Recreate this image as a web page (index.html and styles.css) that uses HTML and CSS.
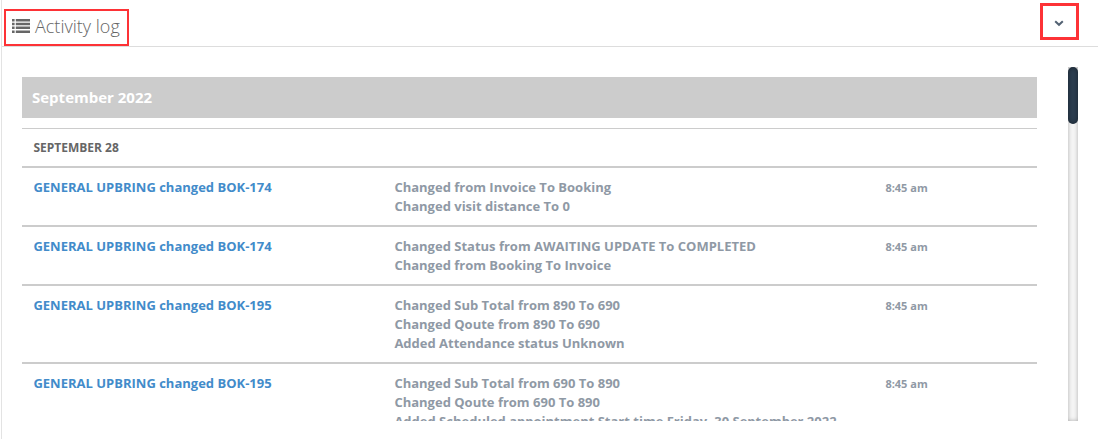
FILE: index.html
```html
<!DOCTYPE html>
<html lang="en">
<head>
    <meta charset="UTF-8">
    <meta name="viewport" content="width=device-width, initial-scale=1.0">
    <title>Activity log</title>
    <link rel="stylesheet" href="styles.css">
</head>
<body>
    <div class="panel">
        <div class="panel-header">
            <h1 class="panel-title">
                <svg class="list-icon" width="18" height="14" viewBox="0 0 18 14" fill="#666">
                    <path d="M0 0h2.6v2.5H0zM3.8 0H18v2.5H3.8zM0 3.8h2.6v2.5H0zM3.8 3.8H18v2.5H3.8zM0 7.6h2.6v2.5H0zM3.8 7.6H18v2.5H3.8zM0 11.4h2.6v2.5H0zM3.8 11.4H18v2.5H3.8z"/>
                </svg>
                <span>Activity log</span>
            </h1>
            <button class="toggle" aria-label="Collapse">
                <svg width="10" height="7" viewBox="0 0 10 7" fill="none" stroke="#536273" stroke-width="2">
                    <path d="M1.2 1.2L5 4.8L8.8 1.2"/>
                </svg>
            </button>
        </div>
        <div class="panel-body">
            <div class="log">
                <h2 class="month">September 2022</h2>
                <div class="day">SEPTEMBER 28</div>
                <div class="row">
                    <a class="subject">GENERAL UPBRING changed BOK-174</a>
                    <div class="changes">
                        <div>Changed from Invoice To Booking</div>
                        <div>Changed visit distance To 0</div>
                    </div>
                    <div class="time">8:45 am</div>
                </div>
                <div class="row">
                    <a class="subject">GENERAL UPBRING changed BOK-174</a>
                    <div class="changes">
                        <div>Changed Status from AWAITING UPDATE To COMPLETED</div>
                        <div>Changed from Booking To Invoice</div>
                    </div>
                    <div class="time">8:45 am</div>
                </div>
                <div class="row">
                    <a class="subject">GENERAL UPBRING changed BOK-195</a>
                    <div class="changes">
                        <div>Changed Sub Total from 890 To 690</div>
                        <div>Changed Qoute from 890 To 690</div>
                        <div>Added Attendance status Unknown</div>
                    </div>
                    <div class="time">8:45 am</div>
                </div>
                <div class="row">
                    <a class="subject">GENERAL UPBRING changed BOK-195</a>
                    <div class="changes">
                        <div>Changed Sub Total from 690 To 890</div>
                        <div>Changed Qoute from 690 To 890</div>
                        <div>Added Scheduled appointment Start time Friday, 30 September 2022</div>
                    </div>
                    <div class="time">8:45 am</div>
                </div>
            </div>
            <div class="scrollbar">
                <div class="thumb"></div>
            </div>
        </div>
    </div>
</body>
</html>
```

FILE: styles.css
```css
* {
    box-sizing: border-box;
}

body {
    margin: 0;
    font-family: "Open Sans", sans-serif;
    font-size: 13px;
    background-color: #fff;
    overflow: hidden;
}

.panel {
    height: 439px;
    margin: 0 2px 0 1px;
    border-left: 1px solid #e3e3e3;
}

.panel-header {
    display: flex;
    justify-content: space-between;
    align-items: flex-start;
    height: 47px;
    padding: 3px 19px 0 2px;
    border-bottom: 1px solid #ddd;
}

.panel-title {
    display: flex;
    align-items: center;
    gap: 5px;
    width: 125px;
    height: 37px;
    margin: 6px 0 0;
    padding: 0 0 4px 6px;
    border: 2px solid #fd3236;
    color: #666;
    font-size: 18px;
    font-weight: 300;
    white-space: nowrap;
}

.list-icon {
    margin-top: 1px;
}

.toggle {
    display: flex;
    justify-content: center;
    align-items: center;
    width: 39px;
    height: 37px;
    padding: 3px 1px 0 0;
    border: 3px solid #fd3236;
    background: none;
}

.panel-body {
    display: flex;
    height: 374px;
    padding: 20px 19px 0 20px;
}

.log {
    width: 1015px;
    height: 354px;
    margin-right: 31px;
    padding-top: 10px;
    overflow: hidden;
}

.month {
    height: 41px;
    margin: 0 0 10px;
    padding-left: 10px;
    background-color: #ccc;
    color: #fff;
    font-size: 15px;
    font-weight: 700;
    line-height: 41px;
}

.day {
    height: 38px;
    padding-left: 11.4px;
    border-top: 1px solid #ccc;
    color: #666;
    font-size: 12px;
    font-weight: 700;
    line-height: 37px;
}

.row {
    display: grid;
    grid-template-columns: 361px 491px 1fr;
    padding: 10px 0 9px 11.4px;
    border-top: 2px solid #ccc;
    color: #8f99a5;
    font-weight: 700;
    line-height: 19px;
}

.subject {
    color: #428bca;
}

.time {
    font-size: 11px;
    line-height: 20px;
}

.scrollbar {
    width: 10px;
    height: 354px;
    background-color: #f5f5f5;
    box-shadow: inset 0 0 4px rgba(0, 0, 0, 0.3);
}

.thumb {
    height: 57px;
    border-radius: 5px;
    background-color: #2c3e50;
    box-shadow: inset 0 0 5px rgba(0, 0, 0, 0.45);
}
```
